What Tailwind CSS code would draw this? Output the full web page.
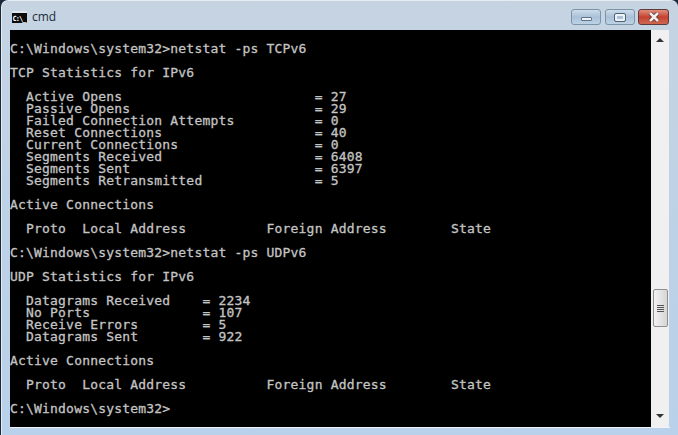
<!DOCTYPE html>
<html lang="en">
<head>
    <meta charset="UTF-8">
    <title>cmd</title>
    <script src="https://cdn.jsdelivr.net/npm/@tailwindcss/browser@4"></script>
</head>
<body class="w-[678px] h-[435px] overflow-hidden bg-[#1b2a3a]">
    <!-- window frame -->
    <div class="w-[677px] h-[435px] ml-[1px] flex flex-col rounded-t-[7px] border-l border-t border-[#e3ebf3] bg-gradient-to-b from-[#c6d4e2] via-[#bed2e6] to-[#b9d1ea] overflow-hidden">
        <!-- title bar -->
        <div class="h-[29px] shrink-0 flex items-start">
            <svg class="w-[15px] h-[12px] mt-[10px] ml-[10px]" viewBox="0 0 15 12">
                <rect width="15" height="12" fill="#0c0c0c"/>
                <rect width="15" height="2" fill="#dfe6ee"/>
                <text x="0.5" y="9.5" font-size="7" font-weight="700" fill="#fff" font-family="DejaVu Sans Mono, monospace" textLength="14">C:\_</text>
            </svg>
            <span class="ml-[5px] mt-[7px] text-[12px] leading-[18px] text-[#1c2a38] font-['Open_Sans',sans-serif]">cmd</span>
            <div class="ml-auto mr-[9px] mt-[8px] flex">
                <div class="w-[30px] h-[16px] flex items-center justify-center rounded-[3px] border border-[#7d93a8] bg-gradient-to-b from-[#cddcea] via-[#a9c1d8] to-[#bdd2e4]">
                    <div class="w-[11px] h-[4px] mt-[3px] rounded-[1px] bg-[#eef3f8] border border-[#5d7287]"></div>
                </div>
                <div class="w-[30px] h-[16px] ml-[4px] flex items-center justify-center rounded-[3px] border border-[#7d93a8] bg-gradient-to-b from-[#cddcea] via-[#a9c1d8] to-[#bdd2e4]">
                    <div class="w-[10px] h-[7px] border-2 border-[#eef3f8] outline outline-1 outline-[#4d6277] rounded-[1px]"></div>
                </div>
                <div class="w-[31px] h-[16px] ml-[3px] flex items-center justify-center rounded-[3px] border border-[#5d3b3b] bg-gradient-to-b from-[#e08d7c] via-[#c4412f] to-[#d0664f]">
                    <svg class="w-[12px] h-[10px]" viewBox="0 0 12 10">
                        <path d="M2 1L10 9M10 1L2 9" stroke="#4a2f2a" stroke-width="4"/>
                        <path d="M2 1L10 9M10 1L2 9" stroke="#f4efec" stroke-width="2.6"/>
                    </svg>
                </div>
            </div>
        </div>
        <!-- client area -->
        <div class="h-[397px] shrink-0 flex ml-[8px] mr-[8px]">
            <pre class="w-[641px] bg-black text-[#c4c4c4] pt-[13px] text-[13px] leading-[12px] tracking-[0.19px] [-webkit-text-stroke:0.3px_#c4c4c4] font-['DejaVu_Sans_Mono',monospace] overflow-hidden">C:\Windows\system32&gt;netstat -ps TCPv6

TCP Statistics for IPv6

  Active Opens                        = 27
  Passive Opens                       = 29
  Failed Connection Attempts          = 0
  Reset Connections                   = 40
  Current Connections                 = 0
  Segments Received                   = 6408
  Segments Sent                       = 6397
  Segments Retransmitted              = 5

Active Connections

  Proto  Local Address          Foreign Address        State

C:\Windows\system32&gt;netstat -ps UDPv6

UDP Statistics for IPv6

  Datagrams Received    = 2234
  No Ports              = 107
  Receive Errors        = 5
  Datagrams Sent        = 922

Active Connections

  Proto  Local Address          Foreign Address        State

C:\Windows\system32&gt;</pre>
            <!-- scrollbar -->
            <div class="w-[18px] flex flex-col items-center bg-[#f0f0f0]">
                <div class="mt-[8px] w-0 h-0 border-x-[4px] border-x-transparent border-b-[4px] border-b-[#333]"></div>
                <div class="mt-[247px] w-[15px] h-[38px] flex flex-col items-center justify-center gap-[1px] rounded-[2px] border border-[#8e8f8f] bg-gradient-to-r from-[#f2f2f2] to-[#d6d6d6]">
                    <div class="w-[7px] h-[1px] bg-[#555]"></div>
                    <div class="w-[7px] h-[1px] bg-[#555]"></div>
                    <div class="w-[7px] h-[1px] bg-[#555]"></div>
                    <div class="w-[7px] h-[1px] bg-[#555]"></div>
                </div>
                <div class="mt-[87px] w-0 h-0 border-x-[4px] border-x-transparent border-t-[4px] border-t-[#333]"></div>
            </div>
        </div>
        <div class="h-[1px] mx-[8px] bg-[#eef4fa]"></div>
    </div>
</body>
</html>
